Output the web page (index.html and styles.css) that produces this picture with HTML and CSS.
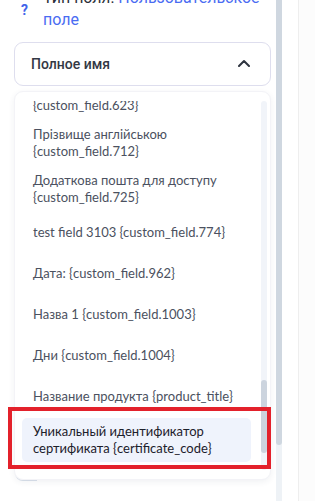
FILE: index.html
```html
<!DOCTYPE html>
<html lang="ru">
<head>
<meta charset="utf-8">
<title>Полное имя</title>
<link rel="stylesheet" href="styles.css">
</head>
<body>
<div class="layout">
  <div class="sidebar">
    <div class="field-type">
      <span class="help">?</span>
      <p class="type-text">Тип поля: <span class="link">Пользовательское поле</span></p>
    </div>
    <div class="select">
      <span class="select-label">Полное имя</span>
      <svg class="chevron" width="12" height="8" viewBox="0 0 12 8"><path d="M1 7 L6 2 L11 7" fill="none" stroke="#2f3540" stroke-width="2" stroke-linecap="round" stroke-linejoin="round"/></svg>
    </div>
    <div class="under-strip"></div>
    <div class="panel">
      <div class="viewport">
        <ul class="list">
          <li class="item item-partial">{custom_field.623}</li>
          <li class="item item-multi">Прізвище англійською<br>{custom_field.712}</li>
          <li class="item item-multi">Додаткова пошта для доступу<br>{custom_field.725}</li>
          <li class="item">test field 3103 {custom_field.774}</li>
          <li class="item">Дата: {custom_field.962}</li>
          <li class="item">Назва 1 {custom_field.1003}</li>
          <li class="item">Дни {custom_field.1004}</li>
          <li class="item">Название продукта {product_title}</li>
          <li class="item item-multi item-active">Уникальный идентификатор<br>сертификата {certificate_code}</li>
        </ul>
      </div>
      <div class="track"><div class="thumb"></div></div>
    </div>
  </div>
  <div class="outer-scroll"><div class="outer-thumb"></div></div>
  <div class="spacer"></div>
  <div class="right"></div>
</div>
<div class="highlight-box"></div>
</body>
</html>
```
FILE: styles.css
```css
* { box-sizing: border-box; }
html, body {
  margin: 0;
  padding: 0;
  width: 315px;
  height: 501px;
  overflow: hidden;
  background: #ffffff;
}
body {
  position: relative;
  font-family: Roboto, "Noto Sans", sans-serif;
}
.layout {
  display: flex;
  height: 501px;
}
.sidebar {
  position: relative;
  width: 276px;
  flex: none;
  padding-left: 14px;
  padding-right: 5px;
}
.field-type {
  display: flex;
  align-items: flex-start;
  margin-top: -13px;
}
.help {
  width: 29px;
  flex: none;
  padding-left: 7px;
  margin-top: 13px;
  font-size: 14px;
  font-weight: 700;
  line-height: 20px;
  color: #4264ea;
}
.type-text {
  margin: 0;
  font-size: 16px;
  line-height: 22px;
  color: #2c3039;
}
.link { color: #4a6cf2; }
.select {
  margin-top: 11px;
  height: 44px;
  border: 1px solid #dedeee;
  border-radius: 9px;
  display: flex;
  align-items: center;
  justify-content: space-between;
  padding: 0 20px 0 16px;
  background: #fff;
}
.select-label {
  font-size: 14px;
  font-weight: 500;
  color: #333844;
}
.chevron { display: block; margin-top: -2px; }
.under-strip {
  position: absolute;
  left: 15px;
  top: 470px;
  width: 22px;
  height: 11px;
  border-bottom: 1px solid #dbe2ec;
  border-radius: 0 0 0 8px;
}
.panel {
  position: relative;
  margin-top: 5px;
  width: 257px;
  height: 389px;
  background: #fff;
  border: 1px solid #f3f3f7;
  border-radius: 9px;
  box-shadow: 0 2px 6px rgba(40, 50, 80, 0.07);
  display: flex;
  padding: 9px 3px 9px 7px;
  gap: 10px;
}
.viewport {
  width: 229px;
  height: 369px;
  overflow: hidden;
  flex: none;
}
.list {
  list-style: none;
  margin: -4px 0 0 0;
  padding: 0;
  display: flex;
  flex-direction: column;
  gap: 2px;
  font-family: Lato, "Noto Sans", sans-serif;
  font-size: 13px;
  line-height: 17px;
  color: #4b5160;
}
.item {
  min-height: 39px;
  display: flex;
  align-items: center;
  padding: 0 11px;
  border-radius: 5px;
}
.item-partial {
  min-height: 0;
  padding-bottom: 5px;
}
.item-multi {
  display: block;
  min-height: 0;
  padding: 5px 11px;
}
.item-active {
  background: #eff3fc;
  color: #1d212b;
}
.track {
  width: 6px;
  height: 369px;
  background: #f1f4f9;
  border-radius: 3px;
  flex: none;
  padding-top: 279px;
}
.thumb {
  height: 73px;
  background: #ccd4de;
  border-radius: 3px;
}
.outer-scroll {
  width: 6px;
  flex: none;
  background: #eef2f6;
}
.outer-thumb {
  height: 445px;
  background: #cfd7e0;
  border-radius: 0 0 3px 3px;
}
.spacer {
  width: 16px;
  flex: none;
}
.right {
  flex: 1;
  border-left: 1px solid #eeeeee;
  background: #fcfcfc;
}
.highlight-box {
  position: absolute;
  left: 8px;
  top: 407px;
  width: 263px;
  height: 62px;
  border: 4px solid #e3212b;
}
```
